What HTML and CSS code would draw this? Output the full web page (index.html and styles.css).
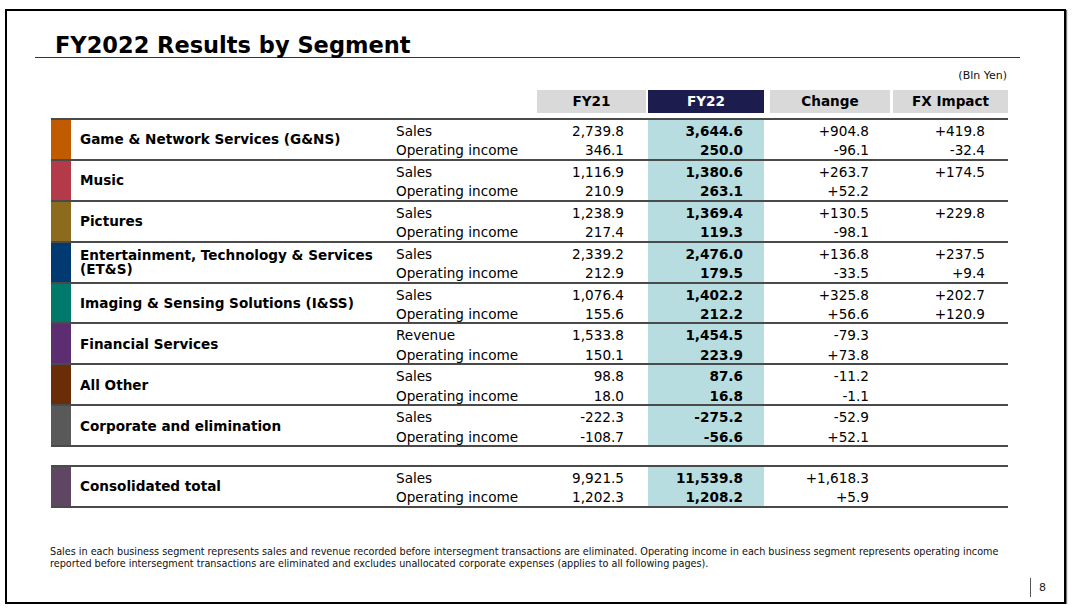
FILE: index.html
```html
<!DOCTYPE html>
<html lang="en">
<head>
<meta charset="utf-8">
<title>FY2022 Results by Segment</title>
<link rel="stylesheet" href="styles.css">
</head>
<body>
<div class="slide">
  <h1 class="title">FY2022 Results by Segment</h1>
  <div class="unit">(Bln Yen)</div>

  <div class="table">
    <div class="head">
      <div class="h h-fy21">FY21</div>
      <div class="h h-fy22">FY22</div>
      <div class="h h-chg">Change</div>
      <div class="h h-fx">FX Impact</div>
    </div>

    <div class="group">
      <div class="seg">
        <div class="bar c-gns"></div>
        <div class="name">Game &amp; Network Services (G&amp;NS)</div>
        <div class="sub">Sales</div><div class="n fy21">2,739.8</div><div class="n fy22">3,644.6</div><div class="n chg">+904.8</div><div class="n fx">+419.8</div>
        <div class="sub">Operating income</div><div class="n fy21">346.1</div><div class="n fy22">250.0</div><div class="n chg">-96.1</div><div class="n fx">-32.4</div>
      </div>
      <div class="seg">
        <div class="bar c-music"></div>
        <div class="name">Music</div>
        <div class="sub">Sales</div><div class="n fy21">1,116.9</div><div class="n fy22">1,380.6</div><div class="n chg">+263.7</div><div class="n fx">+174.5</div>
        <div class="sub">Operating income</div><div class="n fy21">210.9</div><div class="n fy22">263.1</div><div class="n chg">+52.2</div><div class="n fx"></div>
      </div>
      <div class="seg">
        <div class="bar c-pic"></div>
        <div class="name">Pictures</div>
        <div class="sub">Sales</div><div class="n fy21">1,238.9</div><div class="n fy22">1,369.4</div><div class="n chg">+130.5</div><div class="n fx">+229.8</div>
        <div class="sub">Operating income</div><div class="n fy21">217.4</div><div class="n fy22">119.3</div><div class="n chg">-98.1</div><div class="n fx"></div>
      </div>
      <div class="seg">
        <div class="bar c-ets"></div>
        <div class="name two">Entertainment, Technology &amp; Services<br>(ET&amp;S)</div>
        <div class="sub">Sales</div><div class="n fy21">2,339.2</div><div class="n fy22">2,476.0</div><div class="n chg">+136.8</div><div class="n fx">+237.5</div>
        <div class="sub">Operating income</div><div class="n fy21">212.9</div><div class="n fy22">179.5</div><div class="n chg">-33.5</div><div class="n fx">+9.4</div>
      </div>
      <div class="seg">
        <div class="bar c-iss"></div>
        <div class="name">Imaging &amp; Sensing Solutions (I&amp;SS)</div>
        <div class="sub">Sales</div><div class="n fy21">1,076.4</div><div class="n fy22">1,402.2</div><div class="n chg">+325.8</div><div class="n fx">+202.7</div>
        <div class="sub">Operating income</div><div class="n fy21">155.6</div><div class="n fy22">212.2</div><div class="n chg">+56.6</div><div class="n fx">+120.9</div>
      </div>
      <div class="seg">
        <div class="bar c-fin"></div>
        <div class="name">Financial Services</div>
        <div class="sub">Revenue</div><div class="n fy21">1,533.8</div><div class="n fy22">1,454.5</div><div class="n chg">-79.3</div><div class="n fx"></div>
        <div class="sub">Operating income</div><div class="n fy21">150.1</div><div class="n fy22">223.9</div><div class="n chg">+73.8</div><div class="n fx"></div>
      </div>
      <div class="seg">
        <div class="bar c-other"></div>
        <div class="name">All Other</div>
        <div class="sub">Sales</div><div class="n fy21">98.8</div><div class="n fy22">87.6</div><div class="n chg">-11.2</div><div class="n fx"></div>
        <div class="sub">Operating income</div><div class="n fy21">18.0</div><div class="n fy22">16.8</div><div class="n chg">-1.1</div><div class="n fx"></div>
      </div>
      <div class="seg">
        <div class="bar c-corp"></div>
        <div class="name">Corporate and elimination</div>
        <div class="sub">Sales</div><div class="n fy21">-222.3</div><div class="n fy22">-275.2</div><div class="n chg">-52.9</div><div class="n fx"></div>
        <div class="sub">Operating income</div><div class="n fy21">-108.7</div><div class="n fy22">-56.6</div><div class="n chg">+52.1</div><div class="n fx"></div>
      </div>
    </div>

    <div class="group total">
      <div class="seg">
        <div class="bar c-total"></div>
        <div class="name">Consolidated total</div>
        <div class="sub">Sales</div><div class="n fy21">9,921.5</div><div class="n fy22">11,539.8</div><div class="n chg">+1,618.3</div><div class="n fx"></div>
        <div class="sub">Operating income</div><div class="n fy21">1,202.3</div><div class="n fy22">1,208.2</div><div class="n chg">+5.9</div><div class="n fx"></div>
      </div>
    </div>
  </div>

  <p class="note">Sales in each business segment represents sales and revenue recorded before intersegment transactions are eliminated. Operating income in each business segment represents operating income<br>reported before intersegment transactions are eliminated and excludes unallocated corporate expenses (applies to all following pages).</p>

  <div class="footer"><span class="page">8</span></div>
</div>
</body>
</html>
```

FILE: styles.css
```css
html, body {
  margin: 0;
  padding: 0;
  background: #fff;
}

body {
  font-family: "DejaVu Sans", Verdana, sans-serif;
  color: #000;
}

.slide {
  box-sizing: border-box;
  width: 1061px;
  height: 595px;
  margin: 9px 0 0 5px;
  border: 2px solid #000;
  box-shadow: 1px 1px 1px #777;
  display: flex;
  flex-direction: column;
}

.title {
  margin: 22px 44px 0 28px;
  padding-left: 20px;
  font-size: 22.5px;
  line-height: 24px;
  font-weight: bold;
  border-bottom: 1px solid #333;
  color: #000;
}

.unit {
  align-self: flex-end;
  margin: 11px 57px 0 0;
  font-size: 11px;
  line-height: 14px;
  color: #111;
}

.table {
  margin: 7px 0 0 44px;
  width: 957px;
  font-size: 13.6px;
}

.head,
.seg {
  display: grid;
  grid-template-columns: 20px 325px 141px 111px 116px 126px 118px;
}

.head {
  height: 23px;
  margin-bottom: 5px;
}

.h {
  background: #d9d9d9;
  font-weight: bold;
  text-align: center;
  line-height: 23px;
}

.h-fy21 { grid-column: 4; margin-right: 2px; }
.h-fy22 { grid-column: 5; background: #1c1c4f; color: #fff; }
.h-chg { grid-column: 6; margin-left: 6px; }
.h-fx { grid-column: 7; margin-left: 3px; }

.group {
  border-top: 2px solid #4a4a4a;
}

.group.total {
  margin-top: 18px;
}

.seg {
  grid-template-rows: 19.44px 19.44px;
  border-bottom: 2px solid #4a4a4a;
  line-height: 19.44px;
}

.bar {
  grid-row: 1 / span 2;
  grid-column: 1;
}

.name {
  grid-row: 1 / span 2;
  grid-column: 2;
  align-self: center;
  padding: 1px 0 0 9px;
  font-weight: bold;
  line-height: 15px;
}

.name.two {
  line-height: 14px;
  padding-top: 0;
}

.sub,
.n {
  padding-top: 2px;
  white-space: nowrap;
}

.sub {
  grid-column: 3;
}

.n {
  text-align: right;
}

.fy21 { grid-column: 4; padding-right: 24px; }
.fy22 { grid-column: 5; padding-right: 21px; font-weight: bold; background: #b8dde0; }
.chg { grid-column: 6; padding-right: 21px; }
.fx { grid-column: 7; padding-right: 23px; }

.c-gns { background: #c05b00; }
.c-music { background: #b33a49; }
.c-pic { background: #8c6b1f; }
.c-ets { background: #003a70; }
.c-iss { background: #00786a; }
.c-fin { background: #5c2d70; }
.c-other { background: #6b2c08; }
.c-corp { background: #595959; }
.c-total { background: #5f4763; }

.note {
  margin: 38px 0 0 43px;
  font-family: "DejaVu Sans Condensed", "DejaVu Sans", sans-serif;
  font-stretch: condensed;
  font-size: 10.74px;
  line-height: 12px;
  white-space: nowrap;
  color: #111;
}

.footer {
  display: flex;
  justify-content: flex-end;
  margin-top: 8px;
  padding-right: 18px;
}

.page {
  border-left: 1px solid #555;
  padding-left: 8px;
  height: 19px;
  font-size: 11px;
  line-height: 19px;
  color: #222;
}
```
